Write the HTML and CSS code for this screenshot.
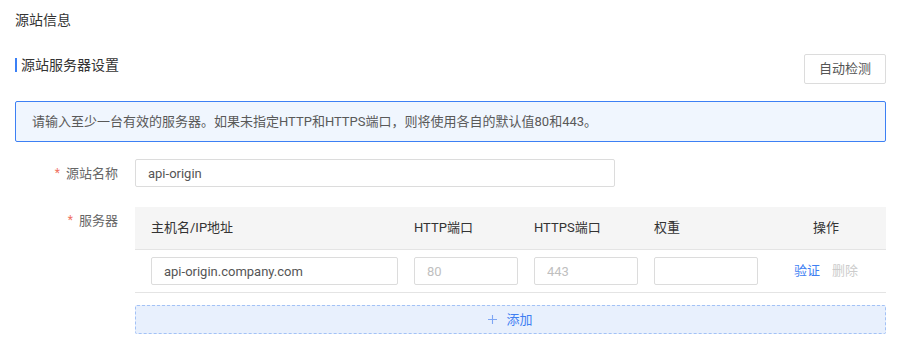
FILE: index.html
```html
<!DOCTYPE html>
<html lang="zh-CN">
<head>
<meta charset="utf-8">
<title>源站信息</title>
<link rel="stylesheet" href="styles.css">
</head>
<body>
<div class="page">
  <h1 class="page-title">源站信息</h1>
  <div class="section-head">
    <h2 class="section-title">源站服务器设置</h2>
    <button class="btn" type="button">自动检测</button>
  </div>
  <div class="alert">请输入至少一台有效的服务器。如果未指定HTTP和HTTPS端口，则将使用各自的默认值80和443。</div>

  <div class="form-row">
    <label class="form-label"><span class="req">*</span>源站名称</label>
    <input class="input input-name" type="text" value="api-origin">
  </div>

  <div class="form-row form-row-top">
    <label class="form-label"><span class="req">*</span>服务器</label>
    <div class="server-table">
      <div class="grid grid-head">
        <div class="cell">主机名/IP地址</div>
        <div class="cell">HTTP端口</div>
        <div class="cell">HTTPS端口</div>
        <div class="cell">权重</div>
        <div class="cell cell-ops">操作</div>
      </div>
      <div class="grid grid-row">
        <div class="cell"><input class="input input-host" type="text" value="api-origin.company.com"></div>
        <div class="cell"><input class="input input-port" type="text" placeholder="80"></div>
        <div class="cell"><input class="input input-port" type="text" placeholder="443"></div>
        <div class="cell"><input class="input input-port" type="text"></div>
        <div class="cell cell-ops"><a class="link link-primary">验证</a><a class="link link-disabled">删除</a></div>
      </div>
      <button class="add-btn" type="button">
        <svg class="plus" width="9" height="9" viewBox="0 0 9 9" aria-hidden="true"><path d="M4.5 0v9M0 4.5h9" stroke="currentColor" stroke-width="1.1" fill="none"/></svg>
        <span>添加</span>
      </button>
    </div>
  </div>
</div>
</body>
</html>
```

FILE: styles.css
```css
* { box-sizing: border-box; }

body {
  margin: 0;
  font-family: Roboto, "Noto Sans CJK SC", sans-serif;
  color: #333;
  background: #fff;
}

.page {
  padding: 10px 12px 0 15px;
}

.page-title {
  margin: 0;
  font-size: 14px;
  line-height: 20px;
  font-weight: 400;
  color: #333;
}

.section-head {
  margin-top: 24px;
  display: flex;
  justify-content: space-between;
  align-items: flex-start;
}

.section-title {
  margin: 4px 0 0;
  font-size: 14px;
  line-height: 14px;
  font-weight: 400;
  color: #333;
  border-left: 2px solid #3b80f6;
  padding-left: 4px;
}

.btn {
  width: 82px;
  height: 30px;
  border: 1px solid #dcdcdc;
  border-radius: 2px;
  background: #fff;
  color: #555;
  font-family: inherit;
  font-size: 13px;
  line-height: 28px;
  padding: 0;
}

.alert {
  margin-top: 17px;
  height: 41px;
  border: 1px solid #3d80f4;
  border-radius: 2px;
  background: #f0f6fe;
  padding: 10px 16px;
  font-size: 13px;
  line-height: 19px;
  color: #595959;
}

.form-row {
  display: flex;
  align-items: center;
  margin-top: 17px;
  line-height: 28px;
}

.form-row-top {
  align-items: flex-start;
  margin-top: 20px;
}

.form-label {
  width: 103px;
  margin-right: 17px;
  text-align: right;
  font-size: 13px;
  line-height: 28px;
  height: 28px;
  color: #666;
}

.form-row-top .form-label {
  line-height: 26px;
}

.req {
  color: #f0715f;
  margin-right: 6px;
  font-size: 12px;
  vertical-align: 1px;
}

.input {
  height: 28px;
  border: 1px solid #dcdcdc;
  border-radius: 2px;
  padding: 0 12px;
  font-family: inherit;
  font-size: 13px;
  color: #555;
  background: #fff;
  outline: none;
}

.input::placeholder {
  color: #bfbfbf;
}

.input-name { width: 480px; display: block; }

.server-table {
  flex: 1;
}

.grid {
  display: grid;
  grid-template-columns: 263px 120px 120px 120px 1fr;
  align-items: center;
  line-height: 28px;
}

.grid-head {
  height: 43px;
  background: #f5f5f5;
  border-bottom: 1px solid #e4e4e4;
  font-size: 13px;
  color: #333;
}

.grid-row {
  height: 43px;
  padding: 7px 0;
  border-bottom: 1px solid #e4e4e4;
}

.cell {
  padding-left: 16px;
  height: 28px;
}

.cell-ops {
  padding-left: 8px;
  text-align: center;
  font-size: 13px;
}

.input-host { width: 247px; display: block; }
.input-port { width: 104px; display: block; }

.link {
  font-size: 13px;
  line-height: 28px;
}

.link-primary { color: #3f7ff2; }
.link-disabled { color: #cccccc; margin-left: 12px; }

.add-btn {
  display: flex;
  align-items: center;
  justify-content: center;
  width: 100%;
  height: 29px;
  margin-top: 12px;
  border: 1px dashed #a3c2f6;
  border-radius: 2px;
  background: #e8f0fd;
  color: #3f7ff2;
  font-family: inherit;
  font-size: 13px;
  line-height: 27px;
  padding: 0;
}

.plus {
  color: #7ea6f4;
  margin-right: 9px;
}
```
